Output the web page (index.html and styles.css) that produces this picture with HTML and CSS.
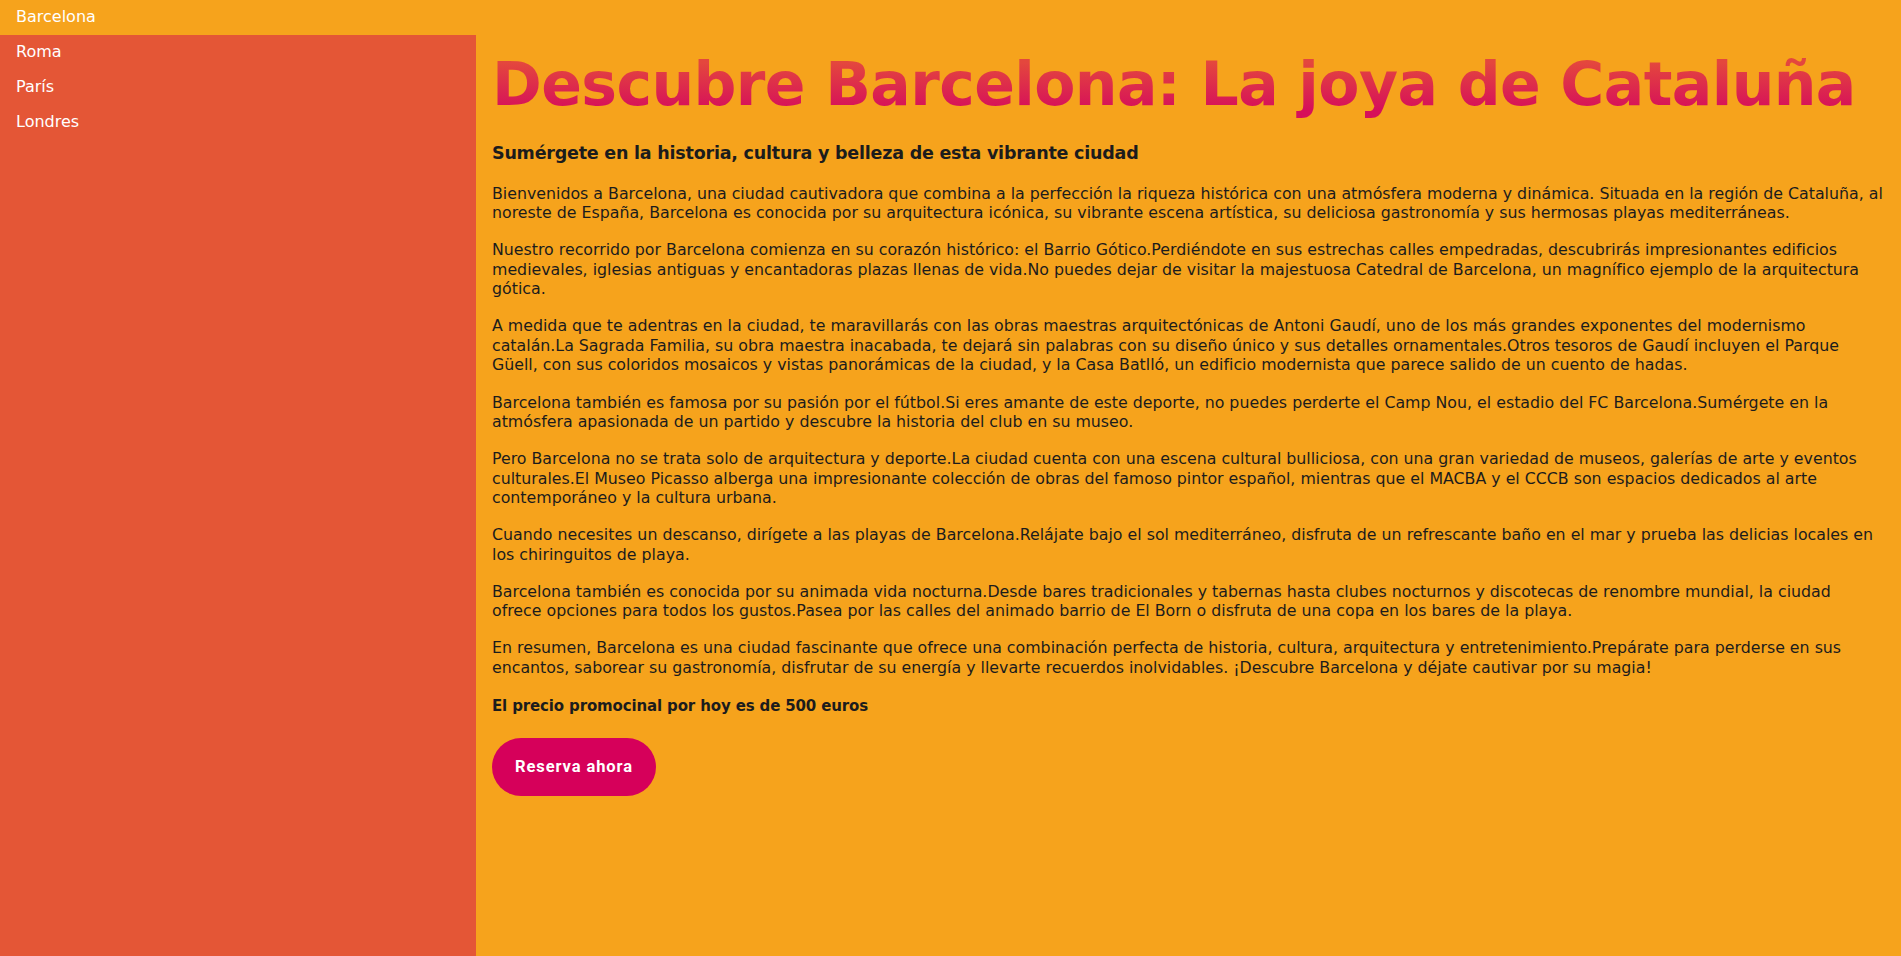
FILE: index.html
```html
<!DOCTYPE html>
<html lang="es">
<head>
<meta charset="utf-8">
<title>Descubre Barcelona</title>
<link rel="stylesheet" href="styles.css">
</head>
<body>
<div class="layout">
  <aside class="sidebar">
    <nav>
      <ul class="nav-list">
        <li class="nav-item active"><a href="#">Barcelona</a></li>
        <li class="nav-item"><a href="#">Roma</a></li>
        <li class="nav-item"><a href="#">París</a></li>
        <li class="nav-item"><a href="#">Londres</a></li>
      </ul>
    </nav>
  </aside>
  <main class="content">
    <h1 class="title">Descubre Barcelona: La joya de Cataluña</h1>
    <h3 class="subtitle">Sumérgete en la historia, cultura y belleza de esta vibrante ciudad</h3>
    <p>Bienvenidos a Barcelona, una ciudad cautivadora que combina a la perfección la riqueza histórica con una atmósfera moderna y dinámica. Situada en la región de Cataluña, al noreste de España, Barcelona es conocida por su arquitectura icónica, su vibrante escena artística, su deliciosa gastronomía y sus hermosas playas mediterráneas.</p>
    <p>Nuestro recorrido por Barcelona comienza en su corazón histórico: el Barrio Gótico.Perdiéndote en sus estrechas calles empedradas, descubrirás impresionantes edificios medievales, iglesias antiguas y encantadoras plazas llenas de vida.No puedes dejar de visitar la majestuosa Catedral de Barcelona, un magnífico ejemplo de la arquitectura gótica.</p>
    <p>A medida que te adentras en la ciudad, te maravillarás con las obras maestras arquitectónicas de Antoni Gaudí, uno de los más grandes exponentes del modernismo catalán.La Sagrada Familia, su obra maestra inacabada, te dejará sin palabras con su diseño único y sus detalles ornamentales.Otros tesoros de Gaudí incluyen el Parque Güell, con sus coloridos mosaicos y vistas panorámicas de la ciudad, y la Casa Batlló, un edificio modernista que parece salido de un cuento de hadas.</p>
    <p>Barcelona también es famosa por su pasión por el fútbol.Si eres amante de este deporte, no puedes perderte el Camp Nou, el estadio del FC Barcelona.Sumérgete en la atmósfera apasionada de un partido y descubre la historia del club en su museo.</p>
    <p>Pero Barcelona no se trata solo de arquitectura y deporte.La ciudad cuenta con una escena cultural bulliciosa, con una gran variedad de museos, galerías de arte y eventos culturales.El Museo Picasso alberga una impresionante colección de obras del famoso pintor español, mientras que el MACBA y el CCCB son espacios dedicados al arte contemporáneo y la cultura urbana.</p>
    <p>Cuando necesites un descanso, dirígete a las playas de Barcelona.Relájate bajo el sol mediterráneo, disfruta de un refrescante baño en el mar y prueba las delicias locales en los chiringuitos de playa.</p>
    <p>Barcelona también es conocida por su animada vida nocturna.Desde bares tradicionales y tabernas hasta clubes nocturnos y discotecas de renombre mundial, la ciudad ofrece opciones para todos los gustos.Pasea por las calles del animado barrio de El Born o disfruta de una copa en los bares de la playa.</p>
    <p>En resumen, Barcelona es una ciudad fascinante que ofrece una combinación perfecta de historia, cultura, arquitectura y entretenimiento.Prepárate para perderse en sus encantos, saborear su gastronomía, disfrutar de su energía y llevarte recuerdos inolvidables. ¡Descubre Barcelona y déjate cautivar por su magia!</p>
    <p class="price"><strong>El precio promocinal por hoy es de 500 euros</strong></p>
    <button class="cta" type="button">Reserva ahora</button>
  </main>
</div>
</body>
</html>
```
FILE: styles.css
```css
* {
  box-sizing: border-box;
}

html, body {
  margin: 0;
  padding: 0;
}

body {
  background: #f6a31c;
  color: #1c1c1c;
  font-family: "DejaVu Sans", "Open Sans", sans-serif;
  font-size: 15.8px;
}

.layout {
  display: flex;
  min-height: 100vh;
}

.sidebar {
  width: 476px;
  flex: 0 0 476px;
  background: #e45636;
}

.nav-list {
  list-style: none;
  margin: 0;
  padding: 0;
}

.nav-item a {
  display: block;
  padding: 7px 16px 8px;
  line-height: 20px;
  color: #ffffff;
  text-decoration: none;
  font-size: 16px;
}

.nav-item.active {
  background: #f6a31c;
}

.content {
  flex: 1;
  padding: 0 16px 40px;
}

.title {
  margin: 48px 0 0;
  font-size: 60px;
  line-height: 72px;
  font-weight: 700;
  letter-spacing: -0.6px;
  background: linear-gradient(to bottom, #e4473d 20%, #d6105a 85%);
  -webkit-background-clip: text;
  background-clip: text;
  color: transparent;
  display: inline-block;
}

.subtitle {
  margin: 22px 0 19.8px;
  font-size: 17.5px;
  line-height: 22px;
  letter-spacing: -0.22px;
  font-weight: 700;
}

.content p {
  margin: 0 0 17.6px;
  line-height: 19.5px;
}

.content p.price {
  margin-top: 19.3px;
  margin-bottom: 21.7px;
  font-size: 15px;
  letter-spacing: -0.14px;
}

.cta {
  display: block;
  width: 164px;
  height: 58px;
  border: none;
  border-radius: 29px;
  background: #d6005a;
  color: #ffffff;
  font-family: Roboto, "Liberation Sans", sans-serif;
  font-weight: 700;
  font-size: 16.5px;
  letter-spacing: 0.9px;
  cursor: pointer;
}
```
